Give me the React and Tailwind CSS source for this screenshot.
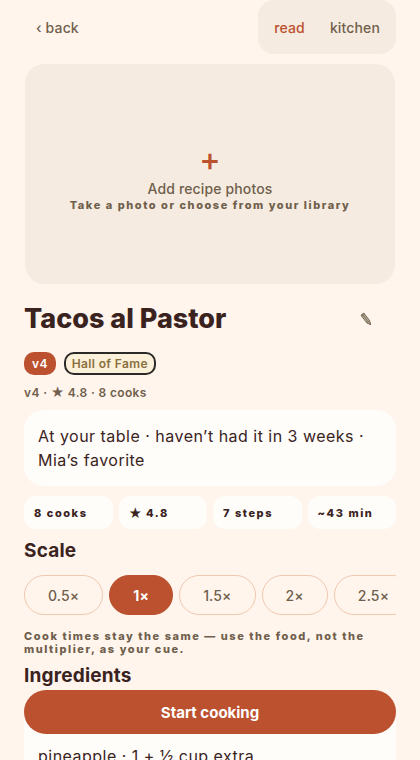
// src/pages/RecipeDetail.jsx
import { useState } from 'react';

const recipe = {
  title: 'Tacos al Pastor',
  version: 'v4',
  badge: 'Hall of Fame',
  rating: '4.8',
  cooks: '8 cooks',
  note: 'At your table · haven’t had it in 3 weeks · Mia’s favorite',
  steps: '7 steps',
  time: '~43 min',
  ingredients: ['pineapple · 1 + ½ cup extra'],
};

const scales = ['0.5×', '1×', '1.5×', '2×', '2.5×'];
const modes = ['read', 'kitchen'];

function PencilIcon() {
  return (
    <svg width="12" height="14" viewBox="0 0 12 14" fill="none" aria-hidden="true">
      <path
        d="M1 3.2 3.8 1 9.6 8.6 10.6 12.6 6.9 10.9Z"
        fill="#b5a998"
        stroke="#6f5e4a"
        strokeWidth="0.9"
        strokeLinejoin="round"
      />
      <path d="M2.4 2.1 8.2 9.7M1.8 4.4 4.7 2.2M6.9 10.9 9.6 8.6" stroke="#6f5e4a" strokeWidth="0.7" />
      <path d="M9.2 12 10.9 12.9 10.3 10.8Z" fill="#6f5e4a" />
    </svg>
  );
}

function Rating({ value }) {
  return (
    <>
      <span className="text-[13px] leading-none tracking-normal">★</span> {value}
    </>
  );
}

function Stat({ children }) {
  return (
    <li className="flex h-[33px] items-center gap-1 rounded-xl bg-[#fffdf9] px-[10px] pt-px text-[11px] leading-[13px] font-extrabold tracking-[0.14em]">
      {children}
    </li>
  );
}

export default function App() {
  const [mode, setMode] = useState('read');
  const [scale, setScale] = useState('1×');

  return (
    <div className="relative h-screen overflow-hidden bg-[#fff5ed] font-['Inter',sans-serif] text-[#3a231e]">
      <main className="h-full overflow-y-auto px-6 [scrollbar-width:none]">
        {/* Top bar */}
        <header className="flex items-center justify-between">
          <button className="px-3 pt-[10px] pb-2 text-sm font-medium tracking-[0.01em] text-[#705f4c]">
            ‹ back
          </button>
          <nav className="flex gap-px rounded-2xl bg-[#f5ebe0] px-1 pt-[6px] pb-1">
            {modes.map((m) => (
              <button
                key={m}
                onClick={() => setMode(m)}
                className={`h-11 px-3 text-sm font-medium tracking-[0.01em] ${
                  mode === m ? 'text-[#bb512f]' : 'text-[#705f4c]'
                }`}
              >
                {m}
              </button>
            ))}
          </nav>
        </header>

        {/* Photo picker */}
        <button className="mt-[10px] flex h-[220px] w-full flex-col items-center justify-center rounded-[20px] border-x border-[#fff5ed] bg-[#f5ebe0] pt-1 text-[#705f4c]">
          <span className="text-[32px] leading-[38px] font-medium text-[#bb512f]">+</span>
          <span className="text-sm leading-5 font-medium tracking-[0.01em]">Add recipe photos</span>
          <span className="text-[11px] leading-[13px] font-extrabold tracking-[0.14em]">
            Take a photo or choose from your library
          </span>
        </button>

        {/* Title */}
        <div className="mt-[13px] flex items-center justify-between">
          <h1 className="text-[27px] leading-8 font-extrabold">{recipe.title}</h1>
          <button aria-label="Edit title" className="flex h-11 w-[60px] items-center justify-center">
            <PencilIcon />
          </button>
        </div>

        <div className="mt-[11px] flex gap-2 text-xs font-semibold tracking-[0.03em]">
          <span className="flex h-[23px] items-center rounded-[10px] bg-[#bb512f] px-2 text-white">
            {recipe.version}
          </span>
          <span className="flex h-[23px] items-center rounded-[10px] border-2 border-[#2b2a28] bg-[#fbf0d9] px-[6px] text-[#8a6f3e]">
            {recipe.badge}
          </span>
        </div>
        <p className="mt-[10px] h-[15px] text-xs leading-[15px] font-semibold tracking-[0.03em] text-[#705f4c]">
          {recipe.version} · <Rating value={recipe.rating} /> · {recipe.cooks}
        </p>

        <p className="mt-[10px] rounded-[20px] bg-[#fffdf9] p-[14px] text-base tracking-[0.03em]">
          {recipe.note}
        </p>

        {/* Stats */}
        <ul className="mt-[10px] grid grid-cols-4 gap-[6px]">
          <Stat>{recipe.cooks}</Stat>
          <Stat>
            <Rating value={recipe.rating} />
          </Stat>
          <Stat>{recipe.steps}</Stat>
          <Stat>{recipe.time}</Stat>
        </ul>

        {/* Scale */}
        <h2 className="mt-[10px] text-[19px] leading-6 font-bold tracking-[0.01em]">Scale</h2>
        <div className="mt-3 flex gap-[6px] overflow-x-auto [scrollbar-width:none]">
          {scales.map((s) => (
            <button
              key={s}
              onClick={() => setScale(s)}
              className={`h-10 shrink-0 rounded-full border px-[23px] pt-[2px] text-sm tracking-[0.01em] ${
                scale === s
                  ? 'border-[#bb512f] bg-[#bb512f] font-bold text-white'
                  : 'border-[#f0c8b0] font-medium text-[#705f4c]'
              }`}
            >
              {s}
            </button>
          ))}
        </div>
        <p className="mt-[15px] text-[11px] leading-[13px] font-extrabold tracking-[0.14em] text-[#705f4c]">
          Cook times stay the same — use the food, not the multiplier, as your cue.
        </p>

        {/* Ingredients */}
        <h2 className="mt-2 text-[19px] leading-6 font-bold tracking-[0.01em]">Ingredients</h2>
        <ul className="mt-[10px] rounded-[20px] bg-[#fffdf9] px-[14px] pt-[46px] pb-24">
          {recipe.ingredients.map((item) => (
            <li key={item} className="text-base tracking-[0.03em]">
              {item}
            </li>
          ))}
        </ul>
      </main>

      <button className="absolute inset-x-6 bottom-[26px] h-11 rounded-full bg-[#bb512f] pt-[2px] text-[15px] font-bold text-white">
        Start cooking
      </button>
    </div>
  );
}
